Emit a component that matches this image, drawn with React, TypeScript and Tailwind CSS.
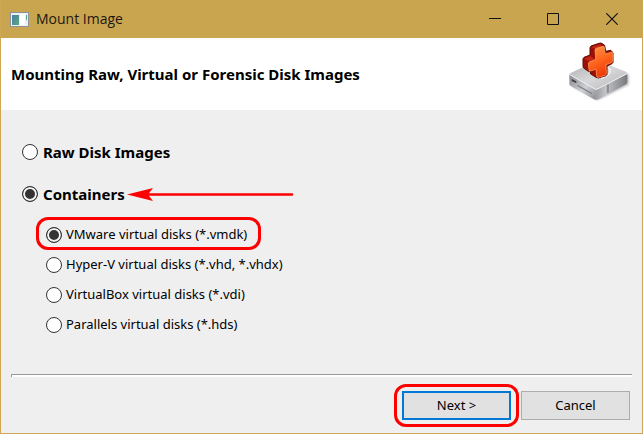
import React, { useState } from 'react';

const containers = [
  { id: 'vmdk', label: 'VMware virtual disks (*.vmdk)' },
  { id: 'vhd', label: 'Hyper-V virtual disks (*.vhd, *.vhdx)' },
  { id: 'vdi', label: 'VirtualBox virtual disks (*.vdi)' },
  { id: 'hds', label: 'Parallels virtual disks (*.hds)' },
];

const radioClass =
  'h-4 w-4 shrink-0 appearance-none rounded-full border border-[#333] bg-white checked:bg-[#333] checked:shadow-[inset_0_0_0_2px_#f4f4f4]';

const WindowIcon = () => (
  <svg width="19" height="15" viewBox="0 0 19 15" aria-hidden="true">
    <defs>
      <linearGradient id="pane" x1="0" y1="0" x2="1" y2="1">
        <stop offset="0" stopColor="#4a7fae" />
        <stop offset="1" stopColor="#5aa87a" />
      </linearGradient>
    </defs>
    <rect x="0.5" y="0.5" width="18" height="14" fill="#eef1f3" stroke="#8e9399" />
    <rect x="2" y="3" width="7" height="10" fill="url(#pane)" />
    <rect x="10" y="2" width="5" height="11" fill="#fff" />
    <path d="M16 3h1v6l-1-2z" fill="#4f9d8c" />
  </svg>
);

const DriveIcon = () => (
  <svg className="mt-0.5 self-start" width="64" height="64" viewBox="24 12 192 192" aria-hidden="true">
    <defs>
      <linearGradient id="lid" x1="0" y1="0" x2="1" y2="1">
        <stop offset="0" stopColor="#a9aaad" />
        <stop offset="0.5" stopColor="#d8d8da" />
        <stop offset="1" stopColor="#b3b4b7" />
      </linearGradient>
      <linearGradient id="front" x1="0" y1="0" x2="1" y2="1">
        <stop offset="0" stopColor="#85868a" />
        <stop offset="0.55" stopColor="#cfd0d3" />
        <stop offset="1" stopColor="#8a8b90" />
      </linearGradient>
      <linearGradient id="side" x1="0" y1="0" x2="1" y2="0">
        <stop offset="0" stopColor="#9c9da2" />
        <stop offset="0.3" stopColor="#c4c5c8" />
        <stop offset="1" stopColor="#77787d" />
      </linearGradient>
      <linearGradient id="cross" x1="0" y1="0" x2="0.4" y2="1">
        <stop offset="0" stopColor="#ff9a4d" />
        <stop offset="0.5" stopColor="#ff6a22" />
        <stop offset="1" stopColor="#f03a06" />
      </linearGradient>
      <filter id="shade" x="-20%" y="-20%" width="140%" height="140%">
        <feGaussianBlur stdDeviation="3" />
      </filter>
    </defs>
    <path d="M34 150 112 193 206 146V116L120 90z" fill="#777" opacity="0.5" filter="url(#shade)" />
    <path d="M28 118Q27 113 32 111L108 76Q114 73 120 76L198 107Q204 110 200 114L116 158Q109 162 102 159z" fill="url(#lid)" />
    <path d="M28 116 105 159Q109 161 109 166V191Q106 192 102 190L31 149Q28 147 28 143z" fill="url(#front)" />
    <path d="M109 162 202 113V138Q202 142 198 145L115 190Q112 192 109 191z" fill="url(#side)" />
    <path d="M29 116 105 159Q109 161 114 158L201 113" fill="none" stroke="#f0f0f2" strokeWidth="3" />
    <path d="M142 146V171M145 145V170" stroke="#6e6f74" strokeWidth="2" />
    <path d="M35 129 49 136V142L35 135z" fill="#3f4044" />
    <path d="M52 148 96 173" stroke="#85868b" strokeWidth="4" />
    <path d="M141 93Q158 101 146 115Q138 122 123 127" fill="none" stroke="#f8f8f9" strokeWidth="4" />
    <path
      d="M93 30 117 22Q121 20 125 22L134 28 137 46 152 43 159 50V79L156 83 141 90V115L138 119 115 126 108 124 92 114 90 105 85 106 71 96 69 91V68L72 64 90 57 90 35z"
      fill="#9c0f07"
      stroke="#650906"
      strokeWidth="3"
      strokeLinejoin="round"
    />
    <path d="M94 34 118 25 128 31 106 38zM73 68 91 60 103 68 86 76z" fill="#c32613" />
    <path
      d="M105 42Q105 38 109 37L129 31Q133 30 133 34L135 54 154 49Q158 48 158 52V74Q158 78 154 80L138 86 139 112Q139 116 135 118L115 124Q110 125 110 120L108 100 91 105Q87 106 87 101L85 83Q85 79 89 77L107 70z"
      fill="url(#cross)"
      stroke="#ffab68"
      strokeWidth="2"
    />
  </svg>
);

const App = () => {
  const [source, setSource] = useState('containers');
  const [format, setFormat] = useState('vmdk');

  return (
    <div className="flex min-h-screen flex-col border border-t-0 border-[#d0a752] bg-[#efefef] font-['Noto_Sans',sans-serif] text-[13px] text-black">
      {/* Title bar */}
      <div className="flex h-[38px] items-center bg-[#caa550] pl-[9px]">
        <WindowIcon />
        <span className="ml-[7px] flex-1 font-['Open_Sans',sans-serif] text-sm text-[#1c1810]">Mount Image</span>
        <button aria-label="Minimize" className="flex h-full w-[58px] items-center justify-center">
          <svg width="12" height="12" viewBox="0 0 12 12">
            <path d="M0 5.5h12" stroke="#111" />
          </svg>
        </button>
        <button aria-label="Maximize" className="flex h-full w-[58px] items-center justify-center">
          <svg width="12" height="12" viewBox="0 0 12 12">
            <path d="M0.5 0.5h11v11h-11z" fill="none" stroke="#111" />
          </svg>
        </button>
        <button aria-label="Close" className="flex h-full w-[60px] items-center justify-center">
          <svg width="12" height="12" viewBox="0 0 12 12">
            <path d="M0.3 0.3l11.4 11.4M11.7 0.3L0.3 11.7" stroke="#111" strokeWidth="1.2" />
          </svg>
        </button>
      </div>

      {/* Header */}
      <div className="flex h-[72px] items-center justify-between bg-white px-[10px]">
        <h1 className="text-[15px] font-bold">Mounting Raw, Virtual or Forensic Disk Images</h1>
        <DriveIcon />
      </div>

      {/* Image type */}
      <div className="flex-1 pt-8 pl-[21px]">
        <label className="flex h-5 w-fit items-center gap-[5px] text-[15px] font-bold">
          <input
            type="radio"
            name="source"
            className={radioClass}
            checked={source === 'raw'}
            onChange={() => setSource('raw')}
          />
          Raw Disk Images
        </label>
        <div className="mt-[22px] flex items-center gap-0.5">
          <label className="flex h-5 items-center gap-[5px] text-[15px] font-bold">
            <input
              type="radio"
              name="source"
              className={radioClass}
              checked={source === 'containers'}
              onChange={() => setSource('containers')}
            />
            Containers
          </label>
          <svg width="167" height="14" viewBox="0 0 167 14" aria-hidden="true">
            <path d="M20 7.5H165" stroke="#fe0000" strokeWidth="2.5" strokeLinecap="round" />
            <path d="M0 7.5L26 1 21 7.5 26 14z" fill="#fe0000" />
          </svg>
        </div>
        <div className="mt-4 pl-6">
          {containers.map(item => (
            <label key={item.id} className="relative flex h-[30px] w-fit items-center gap-1">
              <input
                type="radio"
                name="format"
                className={radioClass}
                checked={format === item.id}
                onChange={() => setFormat(item.id)}
              />
              {item.label}
              {item.id === 'vmdk' && (
                <span className="pointer-events-none absolute -top-[3px] -right-[14px] bottom-0 -left-[10px] rounded-xl border-[3px] border-[#fe0000]" />
              )}
            </label>
          ))}
        </div>
      </div>

      {/* Footer */}
      <div className="px-[10px] pb-[13px]">
        <div className="h-[3px] border-t border-l border-[#999] bg-white" />
        <div className="flex justify-end gap-[10px] pt-[14px] pr-0.5">
          <div className="relative">
            <button className="h-[29px] w-[109px] border-2 border-[#0078d7] bg-[#e1e1e1]">Next &gt;</button>
            <span className="pointer-events-none absolute -inset-x-2 -inset-y-[7px] rounded-xl border-[3px] border-[#fe0000]" />
          </div>
          <button className="h-[29px] w-[109px] border border-[#adadad] bg-[#e1e1e1]">Cancel</button>
        </div>
      </div>
    </div>
  );
};

export default App;
